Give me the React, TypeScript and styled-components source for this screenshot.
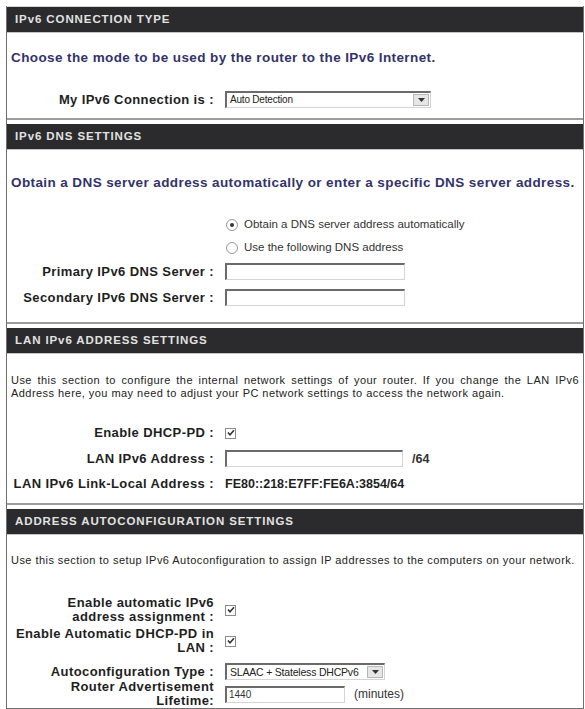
import React from 'react'
import styled, { createGlobalStyle } from 'styled-components'

const GlobalStyle = createGlobalStyle`
    html, body {
        margin: 0;
        padding: 0;
        background: #ffffff;
    }
    body {
        font-family: "Liberation Sans", Arial, sans-serif;
        color: #1b1b1b;
    }
`

const Frame = styled.div`
    margin: 6px 1px 0 6px;
    border: 1px solid #6f6f6f;
    border-top: none;
    width: 576px;
`

const Section = styled.section<{ $first?: boolean }>`
    border-top: ${(p) => (p.$first ? '1px solid #d8d8d8' : '2px solid #9c9c9c')};
    padding-top: ${(p) => (p.$first ? '0' : '4px')};
`

const Header = styled.div`
    height: 25px;
    background: #2b2b2d;
    border-bottom: 1px solid #c4c4c4;
    color: #e2e2e2;
    font-size: 11.5px;
    font-weight: bold;
    letter-spacing: 0.9px;
    line-height: 25px;
    padding-left: 8px;
`

const Body = styled.div<{ $pb: number }>`
    padding: 0 4px ${(p) => p.$pb}px 4px;
`

const Lead = styled.p<{ $mt: number; $mb: number }>`
    margin: ${(p) => p.$mt}px 0 ${(p) => p.$mb}px 0;
    color: #33336a;
    font-size: 13.5px;
    font-weight: bold;
    letter-spacing: 0.4px;
    white-space: nowrap;
`

const Note = styled.p<{ $mt: number; $mb: number }>`
    margin: ${(p) => p.$mt}px 0 ${(p) => p.$mb}px 0;
    font-size: 11px;
    letter-spacing: 0.45px;
    line-height: 13px;
    color: #222;
    text-align: justify;
`

const Rows = styled.div<{ $gap: number }>`
    display: flex;
    flex-direction: column;
    gap: ${(p) => p.$gap}px;
`

const Row = styled.div<{ $mt?: number }>`
    display: grid;
    grid-template-columns: 203px 1fr;
    column-gap: 11px;
    align-items: center;
    margin-top: ${(p) => p.$mt ?? 0}px;
`

const Label = styled.div`
    text-align: right;
    font-size: 13px;
    font-weight: bold;
    letter-spacing: 0.4px;
    line-height: 14px;
    white-space: nowrap;
    color: #1e1e1e;
`

const Control = styled.div`
    display: flex;
    align-items: center;
    gap: 9px;
    font-size: 12px;
`

const Value = styled.span`
    font-size: 12.5px;
    font-weight: bold;
    color: #1e1e1e;
`

const Suffix = styled.span<{ $bold?: boolean }>`
    font-size: ${(p) => (p.$bold ? '12.5px' : '12px')};
    font-weight: ${(p) => (p.$bold ? 'bold' : 'normal')};
    color: #333;
`

const TextBox = styled.div<{ $w: number }>`
    width: ${(p) => p.$w}px;
    height: 17px;
    box-sizing: border-box;
    border-top: 2px solid #6b6b6b;
    border-left: 2px solid #6b6b6b;
    border-right: 1px solid #d4d4d4;
    border-bottom: 1px solid #d4d4d4;
    background: #fff;
    font-size: 10px;
    line-height: 14px;
    padding-left: 2px;
    color: #333;
`

const Select = styled.div<{ $w: number }>`
    width: ${(p) => p.$w}px;
    height: 17px;
    box-sizing: border-box;
    border-top: 2px solid #6b6b6b;
    border-left: 2px solid #6b6b6b;
    border-right: 1px solid #d4d4d4;
    border-bottom: 1px solid #d4d4d4;
    background: #fff;
    display: flex;
    align-items: stretch;
    justify-content: space-between;
`

const SelectText = styled.span<{ $size: number }>`
    font-size: ${(p) => p.$size}px;
    line-height: 14px;
    padding-left: 3px;
    color: #222;
    white-space: nowrap;
    letter-spacing: -0.2px;
`

const SelectArrow = styled.span`
    width: 14px;
    margin: 1px;
    background: #e6e6e6;
    border: 1px solid #b8b8b8;
    display: flex;
    align-items: center;
    justify-content: center;
`

const Check = styled.span`
    width: 9px;
    height: 9px;
    border: 1px solid #8a8a8a;
    background: #fff;
    display: inline-flex;
    align-items: center;
    justify-content: center;
`

const RadioList = styled.div`
    display: flex;
    flex-direction: column;
    gap: 10px;
    padding-left: 215px;
    margin-bottom: 9px;
`

const RadioItem = styled.label`
    display: flex;
    align-items: center;
    gap: 6px;
    font-size: 11.5px;
    line-height: 13px;
    color: #333;
`

const RadioDot = styled.span<{ $on?: boolean }>`
    width: 10px;
    height: 10px;
    border-radius: 50%;
    border: 1px solid #9a9a9a;
    background: #fff;
    display: inline-flex;
    align-items: center;
    justify-content: center;

    &::after {
        content: '';
        width: 4px;
        height: 4px;
        border-radius: 50%;
        background: ${(p) => (p.$on ? '#333' : 'transparent')};
    }
`

const Arrow = () => (
    <svg width="7" height="4" viewBox="0 0 7 4">
        <path d="M0 0h7L3.5 4z" fill="#333" />
    </svg>
)

const Tick = () => (
    <svg width="8" height="8" viewBox="0 0 8 8">
        <path d="M1 3.5l2 2.2L7 1.2" fill="none" stroke="#333" strokeWidth="1.6" />
    </svg>
)

const Dropdown = ({ w, text, size }: { w: number; text: string; size: number }) => (
    <Select $w={w}>
        <SelectText $size={size}>{text}</SelectText>
        <SelectArrow>
            <Arrow />
        </SelectArrow>
    </Select>
)

export default function App() {
    return (
        <>
            <GlobalStyle />
            <Frame>
                <Section $first>
                    <Header>IPv6 CONNECTION TYPE</Header>
                    <Body $pb={10}>
                        <Lead $mt={17} $mb={26}>Choose the mode to be used by the router to the IPv6 Internet.</Lead>
                        <Row>
                            <Label>My IPv6 Connection is :</Label>
                            <Control>
                                <Dropdown w={206} text="Auto Detection" size={10} />
                            </Control>
                        </Row>
                    </Body>
                </Section>

                <Section>
                    <Header>IPv6 DNS SETTINGS</Header>
                    <Body $pb={16}>
                        <Lead $mt={25} $mb={28}>Obtain a DNS server address automatically or enter a specific DNS server address.</Lead>
                        <RadioList>
                            <RadioItem>
                                <RadioDot $on />
                                Obtain a DNS server address automatically
                            </RadioItem>
                            <RadioItem>
                                <RadioDot />
                                Use the following DNS address
                            </RadioItem>
                        </RadioList>
                        <Rows $gap={9}>
                            <Row>
                                <Label>Primary IPv6 DNS Server :</Label>
                                <Control>
                                    <TextBox $w={180} />
                                </Control>
                            </Row>
                            <Row>
                                <Label>Secondary IPv6 DNS Server :</Label>
                                <Control>
                                    <TextBox $w={180} />
                                </Control>
                            </Row>
                        </Rows>
                    </Body>
                </Section>

                <Section>
                    <Header>LAN IPv6 ADDRESS SETTINGS</Header>
                    <Body $pb={12}>
                        <Note $mt={20} $mb={26}>
                            Use this section to configure the internal network settings of your router. If you change the LAN IPv6
                            Address here, you may need to adjust your PC network settings to access the network again.
                        </Note>
                        <Rows $gap={10}>
                            <Row>
                                <Label>Enable DHCP-PD :</Label>
                                <Control>
                                    <Check>
                                        <Tick />
                                    </Check>
                                </Control>
                            </Row>
                            <Row>
                                <Label>LAN IPv6 Address :</Label>
                                <Control>
                                    <TextBox $w={178} />
                                    <Suffix $bold>/64</Suffix>
                                </Control>
                            </Row>
                            <Row>
                                <Label>LAN IPv6 Link-Local Address :</Label>
                                <Control>
                                    <Value>FE80::218:E7FF:FE6A:3854/64</Value>
                                </Control>
                            </Row>
                        </Rows>
                    </Body>
                </Section>

                <Section>
                    <Header>ADDRESS AUTOCONFIGURATION SETTINGS</Header>
                    <Body $pb={0}>
                        <Note $mt={19} $mb={29}>
                            Use this section to setup IPv6 Autoconfiguration to assign IP addresses to the computers on your network.
                        </Note>
                        <Rows $gap={0}>
                            <Row>
                                <Label>
                                    Enable automatic IPv6
                                    <br />
                                    address assignment :
                                </Label>
                                <Control>
                                    <Check>
                                        <Tick />
                                    </Check>
                                </Control>
                            </Row>
                            <Row $mt={3}>
                                <Label>
                                    Enable Automatic DHCP-PD in
                                    <br />
                                    LAN :
                                </Label>
                                <Control>
                                    <Check>
                                        <Tick />
                                    </Check>
                                </Control>
                            </Row>
                            <Row $mt={8}>
                                <Label>Autoconfiguration Type :</Label>
                                <Control>
                                    <Dropdown w={160} text="SLAAC + Stateless DHCPv6" size={10.5} />
                                </Control>
                            </Row>
                            <Row $mt={0}>
                                <Label>
                                    Router Advertisement
                                    <br />
                                    Lifetime:
                                </Label>
                                <Control>
                                    <TextBox $w={120}>1440</TextBox>
                                    <Suffix>(minutes)</Suffix>
                                </Control>
                            </Row>
                        </Rows>
                    </Body>
                </Section>
            </Frame>
        </>
    )
}
